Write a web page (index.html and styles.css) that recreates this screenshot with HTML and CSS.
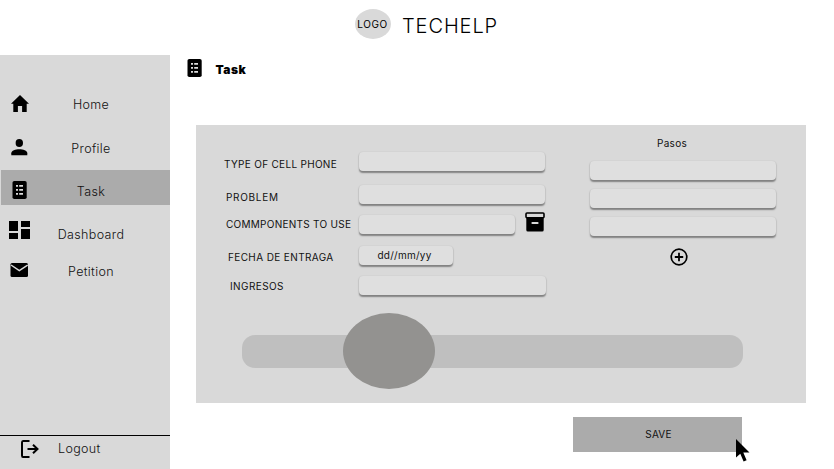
FILE: index.html
```html
<!DOCTYPE html>
<html lang="es">
<head>
<meta charset="utf-8">
<title>TECHELP</title>
<link rel="stylesheet" href="styles.css">
</head>
<body>
<svg class="defs" width="0" height="0">
  <symbol id="list" viewBox="0 0 15 18">
    <rect x=".5" width="14.200" height="18" rx="1.800" fill="#000"/>
    <path fill="#ddd" d="M4 4h2v1.700H4zM7.200 4h3.800v1.700H7.200zM4 8h2v1.800H4zM7.200 8h3.800v1.800H7.200zM4 12h2v1.700H4zM7.200 12h3.800v1.700H7.200z"/>
  </symbol>
</svg>
<header class="header">
  <div class="logo">LOGO</div>
  <h1 class="brand">TECHELP</h1>
</header>
<div class="body">
  <aside class="sidebar">
    <nav class="nav">
      <a class="item home"><svg class="icon" width="18" height="17" viewBox="0 0 18 17"><path d="M9 0 0 8.800h2.300V17h4.600v-6h4.200v6h4.600V8.800H18z"/></svg><span class="label">Home</span></a>
      <a class="item profile"><svg class="icon" width="18" height="18" viewBox="0 0 18 18"><ellipse cx="9.300" cy="5" rx="3.700" ry="4"/><path d="M1.300 17.300v-2C1.300 12.500 5.500 11.200 9.300 11.200s8 1.300 8 4.100v2z"/></svg><span class="label">Profile</span></a>
      <a class="item task active"><svg class="icon" width="15" height="18"><use href="#list"/></svg><span class="label">Task</span></a>
      <a class="item dashboard"><svg class="icon" width="21" height="18" viewBox="0 0 21 18"><path d="M0 0h9v10H0zM12 0h9v6h-9zM0 12h9v6H0zM12 8h9v10h-9z"/></svg><span class="label">Dashboard</span></a>
      <a class="item petition"><svg class="icon" width="18" height="14" viewBox="0 0 18 14"><rect x=".5" width="17.500" height="14" rx="1.500"/><path d="m1 2 8.300 5.700L17.700 2" fill="none" stroke="#d9d9d9" stroke-width="1.500"/></svg><span class="label">Petition</span></a>
    </nav>
    <a class="logout"><svg width="19" height="18" viewBox="0 0 19 18" fill="none" stroke="#000" stroke-width="2"><path d="M8.500 1H2Q1 1 1 2.500v13Q1 17 2 17h6.500M6.500 9h10M12 4.700 16.500 9 12 13.300"/></svg><span>Logout</span></a>
  </aside>
  <main class="main">
    <h2 class="title"><svg width="15" height="18"><use href="#list"/></svg><span>Task</span></h2>
    <section class="panel">
      <div class="columns">
        <form class="form">
          <div class="row type"><label>TYPE OF CELL PHONE</label><div class="field"></div></div>
          <div class="row problem"><label>PROBLEM</label><div class="field"></div></div>
          <div class="row components"><label>COMMPONENTS TO USE</label><div class="field"></div>
            <svg width="20" height="20" viewBox="0 0 20 20"><path d="M1.300 6h17.400v12q0 1.500-1.500 1.500H2.800q-1.500 0-1.500-1.500z"/><rect x="1" y="1" width="18" height="4.800" rx="1" fill="#d9d9d9" stroke="#000" stroke-width="1.600"/><path d="M7.300 11h5.400" stroke="#d9d9d9" stroke-width="1.800" stroke-linecap="round"/></svg></div>
          <div class="row date"><label>FECHA DE ENTRAGA</label><div class="field">dd//mm/yy</div></div>
          <div class="row income"><label>INGRESOS</label><div class="field"></div></div>
        </form>
        <div class="steps">
          <h3>Pasos</h3>
          <div class="field"></div>
          <div class="field"></div>
          <div class="field"></div>
          <svg class="add" width="18" height="18" viewBox="0 0 18 18" fill="none" stroke="#000"><circle cx="9" cy="9" r="7.800" stroke-width="1.700"/><path d="M9 4.800v8.400M4.800 9h8.400" stroke-width="1.800"/></svg>
        </div>
      </div>
      <div class="slider"><div class="thumb"></div></div>
    </section>
    <div class="actions">
      <button class="save">SAVE</button>
      <svg class="cursor" width="14" height="24" viewBox="0 0 14 24"><path d="M0 0v18.500l4.300-3.700 3.300 7.700 3-1.300-3.300-7.600H13.500z"/></svg>
    </div>
  </main>
</div>
</body>
</html>
```
FILE: styles.css
```css
* { box-sizing: border-box; }
body { margin: 0; width: 834px; height: 469px; overflow: hidden; background: #fff; color: #111; font-family: Inter, sans-serif; font-weight: 400; }
svg { display: block; flex: none; }
.defs { position: absolute; }
h1, h2, h3 { margin: 0; font-weight: 400; }
span, label, h1, h2, h3 { white-space: nowrap; }

.header { display: flex; height: 55px; padding: 9px 0 0 355px; }
.logo { width: 36px; height: 30px; border-radius: 50%; background: #d9d9d9; font-size: 10px; line-height: 31px; letter-spacing: .6px; display: flex; justify-content: center; color: #000; padding-right: 1px; }
.brand { margin-left: 11px; font-size: 20px; line-height: 34px; letter-spacing: .9px; font-weight: 300; color: #000; }

.body { display: flex; height: 414px; }
.sidebar { display: flex; flex-direction: column; justify-content: space-between; width: 170px; background: #d9d9d9; font-size: 12.5px; font-weight: 350; letter-spacing: .35px; }
.nav { padding-top: 28px; }
.item { display: grid; grid-template-columns: 38px 106px; align-items: center; }
.icon { justify-self: center; }
.label { justify-self: center; }
.home { height: 43px; }
.home .icon { margin: -2px 0 0 1px; }
.profile { height: 44px; }
.profile .icon { margin-top: -2px; }
.profile .label { margin-top: 1px; }
.task { height: 35px; margin-left: 1px; grid-template-columns: 37px 106px; }
.task .icon { margin-top: 4px; }
.task .label { margin-top: 8px; }
.active { background: #ababab; }
.dashboard { height: 42px; margin-top: 8px; }
.dashboard .icon { margin-bottom: 8px; }
.dashboard .label { margin-top: 1px; }
.petition { height: 31px; }
.petition .icon { margin-bottom: 2px; }
.petition .label { margin-top: 2px; }
.logout { display: flex; align-items: center; height: 34px; padding: 0 0 9px 21px; border-top: 1px solid #000; }
.logout svg { margin-top: 2px; }
.logout span { margin-left: 18px; }

.main { width: 664px; }
.title { display: flex; height: 70px; padding: 4px 0 0 17px; font-size: 12px; line-height: 22px; font-weight: 900; letter-spacing: .5px; color: #000; }
.title span { margin-left: 13.5px; }
.panel { width: 610px; height: 278px; margin-left: 26px; background: #d9d9d9; font-size: 10px; letter-spacing: .27px; }
.columns { display: flex; height: 210px; }
.form { width: 394px; padding-top: 27px; }
.row { display: grid; grid-template-columns: 163px auto 1fr; height: 19px; }
.row label { line-height: 19px; }
.field { height: 19px; border-radius: 4px; background: #dfdfdf; box-shadow: 0 1.5px 1.5px rgba(0,0,0,.4), 0 0 2px rgba(0,0,0,.05); }
.type .field, .problem .field { width: 186px; }
.type label { padding: 3px 0 0 28px; letter-spacing: .31px; }
.problem { margin-top: 14px; }
.problem label { padding: 3px 0 0 30px; letter-spacing: .7px; }
.components { margin-top: 11px; }
.components label { padding-left: 30px; }
.components .field { width: 156px; }
.components svg { margin: -3px 0 0 9.5px; }
.date { margin-top: 12px; }
.date label { padding: 2px 0 0 32px; letter-spacing: .38px; }
.date .field { width: 94px; line-height: 19px; text-align: center; padding-right: 3px; }
.income { margin-top: 11px; }
.income label { padding: 1px 0 0 34px; letter-spacing: .4px; }
.income .field { width: 187px; }
.steps { width: 186px; padding-top: 12px; }
.steps h3 { height: 24px; line-height: 13px; font-size: 10px; text-align: center; padding-right: 22px; }
.steps .field { margin-bottom: 9px; }
.add { margin: 12px 0 0 80px; }
.slider { width: 501px; height: 33px; margin-left: 46px; border-radius: 13px; background: #bfbfbf; }
.thumb { position: relative; left: 101px; top: -22px; width: 92px; height: 76px; border-radius: 50%; background: #939290; }
.actions { position: relative; width: 169px; margin: 14px 0 0 403px; }
.save { display: block; width: 169px; height: 35px; padding: 0 0 1px 2px; border: 0; background: #ababab; font: 10px Inter, sans-serif; letter-spacing: .2px; color: #111; }
.cursor { position: absolute; left: 163px; top: 22px; }
```
